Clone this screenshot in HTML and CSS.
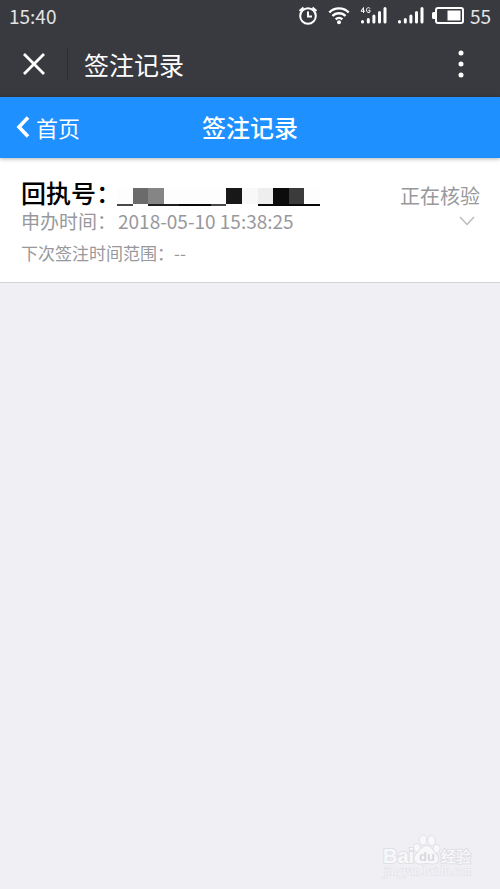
FILE: index.html
```html
<!DOCTYPE html>
<html lang="zh-CN">
<head>
<meta charset="utf-8">
<meta name="viewport" content="width=device-width, initial-scale=1">
<title>签注记录</title>
<link rel="stylesheet" href="styles.css">
</head>
<body>
<div class="shell">
  <div class="status-bar">
    <span>15:40</span>
    <div class="status-icons">
      <svg width="20" height="20" viewBox="0 0 20 20" fill="none" stroke="#fff" stroke-width="2" aria-hidden="true">
        <circle cx="10" cy="10" r="7.800"/><path d="M10 5.500v5h4M1.500 5l4-3.500M18.500 5l-4-3.500"/>
      </svg>
      <svg class="wifi" width="22" height="20" viewBox="0 0 22 20" fill="none" stroke="#fff" stroke-width="2.400" aria-hidden="true">
        <path d="M1.300 6.500a13.500 13.500 0 0 1 19.400 0M4.500 10a9 9 0 0 1 13 0M7.700 13.300a4.700 4.700 0 0 1 6.600 0"/><circle cx="11" cy="16.300" r="2" fill="#fff" stroke="none"/>
      </svg>
      <svg class="signal" width="27" height="20" viewBox="0 0 27 20" fill="none" stroke="#fff" aria-hidden="true">
        <path stroke-width="3" stroke-linecap="round" d="M2.500 15.500v.500M8.300 13.500v2.500M13.900 10v6M19.500 6.500v9.500M25 2.500v13.500"/>
        <path stroke-width="1" d="M3.500 7V1.500L1 5.200h4M10 2.500C9 1 6.500 1.400 6.500 4S9 7.200 10 6V4.300H8.400"/>
      </svg>
      <svg class="signal" width="27" height="20" viewBox="0 0 27 20" fill="none" stroke="#fff" aria-hidden="true">
        <path stroke-width="3" stroke-linecap="round" d="M2.500 15.500v.500M8.300 13.500v2.500M13.900 10v6M19.500 6.500v9.500M25 2.500v13.500"/>
      </svg>
      <svg class="battery" width="32" height="20" viewBox="0 0 32 20" aria-hidden="true">
        <rect x="4" y="2" width="27" height="15" rx="2" fill="none" stroke="#fff" stroke-width="2"/>
        <path fill="#fff" d="M15.500 4.500H28.500v10h-13zM3 6v7H1.500Q0 13 0 11.500v-4Q0 6 1.500 6z"/>
      </svg>
      <span>55</span>
    </div>
  </div>
  <header class="app-bar">
    <button class="close" type="button" aria-label="关闭">
      <svg width="22" height="22" viewBox="0 0 22 22" stroke="#fff" stroke-width="2.800" aria-hidden="true"><path d="M1 1l20 20M21 1L1 21"/></svg>
    </button>
    <div class="app-title">签注记录</div>
    <button class="more" type="button" aria-label="更多">
      <svg width="6" height="28" viewBox="0 0 6 28" fill="#fff" aria-hidden="true"><circle cx="3" cy="3" r="2.500"/><circle cx="3" cy="14" r="2.500"/><circle cx="3" cy="25" r="2.500"/></svg>
    </button>
  </header>
</div>
<nav class="nav">
  <a class="back" href="#">
    <svg width="14" height="22" viewBox="0 0 14 22" fill="none" stroke="#fff" stroke-width="3.600" aria-hidden="true"><path d="M12 1.500L3 11l9 9.500"/></svg>
    首页
  </a>
  <h1>签注记录</h1>
</nav>
<main class="record">
  <div class="row heading">
    <h2>回执号：</h2>
    <svg width="203" height="18" viewBox="0 0 13 18" preserveAspectRatio="none" shape-rendering="crispEdges" role="img" aria-label="已隐藏">
      <path fill="#fdfdfd" d="M0 0h13v16H0z"/>
      <path fill="#6b6b6b" d="M1 0h1v16H1z"/><path fill="#858585" d="M2 0h1v16H2z"/>
      <path fill="#181818" d="M7 0h1v16H7z"/><path fill="#f8f8f8" d="M8 0h1v16H8z"/><path fill="#eee" d="M9 0h1v16H9z"/>
      <path fill="#0c0c0c" d="M10 0h1v16h-1z"/><path fill="#3b3b3b" d="M11 0h1v16h-1z"/>
      <path fill="#484848" d="M0 16h1v2H0zM6 16h1v2H6z"/><path fill="#202020" d="M2 16h2v2H2z"/><path fill="#080808" d="M4 16h2v2H4zM9 16h4v2H9z"/>
    </svg>
    <span class="state">正在核验</span>
  </div>
  <div class="row">
    <div class="applied"><span>申办时间：</span><time datetime="2018-05-10T15:38:25">2018-05-10 15:38:25</time></div>
    <button class="expand" type="button" aria-label="展开">
      <svg width="16" height="10" viewBox="0 0 16 10" fill="none" stroke="#bbb" stroke-width="1.500" aria-hidden="true"><path d="M1 1l7 7.500L15 1"/></svg>
    </button>
  </div>
  <p class="range">下次签注时间范围：--</p>
</main>
<footer class="watermark">
  <svg width="92" height="46" viewBox="0 0 92 46" role="img" aria-label="Baidu 经验">
    <g class="mark">
      <ellipse cx="37" cy="15" rx="3" ry="4" transform="rotate(-15 37 15)"/><ellipse cx="43" cy="7" rx="3.300" ry="4.500"/><ellipse cx="51.500" cy="7.500" rx="3.300" ry="4.500"/><ellipse cx="56.500" cy="16" rx="3" ry="4" transform="rotate(15 56.500 16)"/>
      <path d="M46.500 13c4 0 5.500 4 9 7.500 4.500 4.500 3 10-2 10-3 0-5-.500-7-.500s-4 .500-7 .500c-5.500 0-7-5.500-2.500-10 3.500-3.500 5.500-7.500 9.500-7.500z"/>
      <text class="mark-latin" x="3" y="30">Bai</text><text class="mark-cn" x="61" y="29">经验</text>
      <text class="mark-url" x="4" y="42">jingyan.baidu.com</text>
    </g>
    <text class="mark-du" x="39" y="28">du</text>
  </svg>
</footer>
</body>
</html>
```
FILE: styles.css
```css
* { box-sizing: border-box; }

body {
  margin: 0;
  min-height: 100vh;
  display: flex;
  flex-direction: column;
  background: #efeff4;
  font-family: "Noto Sans CJK SC", "Noto Sans", sans-serif;
}

button {
  display: flex;
  align-items: center;
  justify-content: center;
  padding: 0;
  border: 0;
  background: none;
}

h1, h2, p { margin: 0; }
svg { display: block; flex: none; }

.shell {
  background: #393a3f;
  color: #fff;
}

.status-bar {
  display: flex;
  justify-content: space-between;
  align-items: center;
  height: 32px;
  padding: 0 9px 2px 9px;
  font-size: 19px;
  color: #e4e4e4;
}

.status-icons { display: flex; align-items: center; }
.status-icons svg { margin-top: 2px; }
.status-icons .wifi { margin-left: 10px; }
.status-icons .signal { margin-left: 10px; }
.status-icons .battery { margin-left: 8px; margin-right: 6px; }

.app-bar {
  display: flex;
  align-items: center;
  height: 65px;
  padding-bottom: 2px;
}

.close {
  width: 68px;
  height: 34px;
  border-right: 1px solid #2f2f33;
}

.app-title {
  flex: 1;
  padding-left: 16px;
  font-size: 25px;
  line-height: 34px;
}

.more { width: 78px; height: 40px; }

.nav {
  position: relative;
  z-index: 1;
  display: grid;
  grid-template-columns: 1fr auto 1fr;
  align-items: center;
  height: 61px;
  padding-bottom: 1px;
  background: #1e90ff;
  color: #fff;
  box-shadow: 0 1px 4px rgba(0, 0, 0, 0.3);
}

.back {
  display: flex;
  align-items: center;
  gap: 6px;
  padding-left: 16px;
  color: inherit;
  font-size: 22px;
  line-height: 32px;
  text-decoration: none;
}

.nav h1 {
  font-size: 24px;
  font-weight: 500;
  line-height: 36px;
}

.record {
  padding: 20px 20px 15px 21px;
  background: #fff;
  border-bottom: 1px solid #d4d4d8;
  color: #98989c;
}

.row { display: flex; align-items: center; }
.row.heading { align-items: flex-end; }

.row h2 {
  width: 96px;
  color: #000;
  font-size: 25px;
  font-weight: 500;
  line-height: 28px;
  white-space: nowrap;
}

.state {
  margin-left: auto;
  font-size: 20px;
  line-height: 20px;
}

.applied {
  display: flex;
  flex: 1;
  gap: 2px;
  font-size: 19px;
  line-height: 29px;
}

.expand { width: 26px; height: 24px; }

.range {
  margin-top: 4px;
  font-size: 17px;
  line-height: 28px;
}

.watermark {
  display: flex;
  justify-content: flex-end;
  margin-top: auto;
  padding: 0 28px 10px 0;
}

.mark {
  fill: #f8f8fa;
  stroke: #e0e0e5;
  stroke-width: 2px;
  paint-order: stroke;
}

.mark-latin { font: bold 20px "Liberation Sans", sans-serif; }
.mark-cn { font-size: 15px; font-weight: 500; }
.mark-url { font: 12px "Liberation Serif", serif; stroke-width: 1px; }
.mark-du { font: bold 13px "Liberation Sans", sans-serif; fill: #d8d8de; }
```
